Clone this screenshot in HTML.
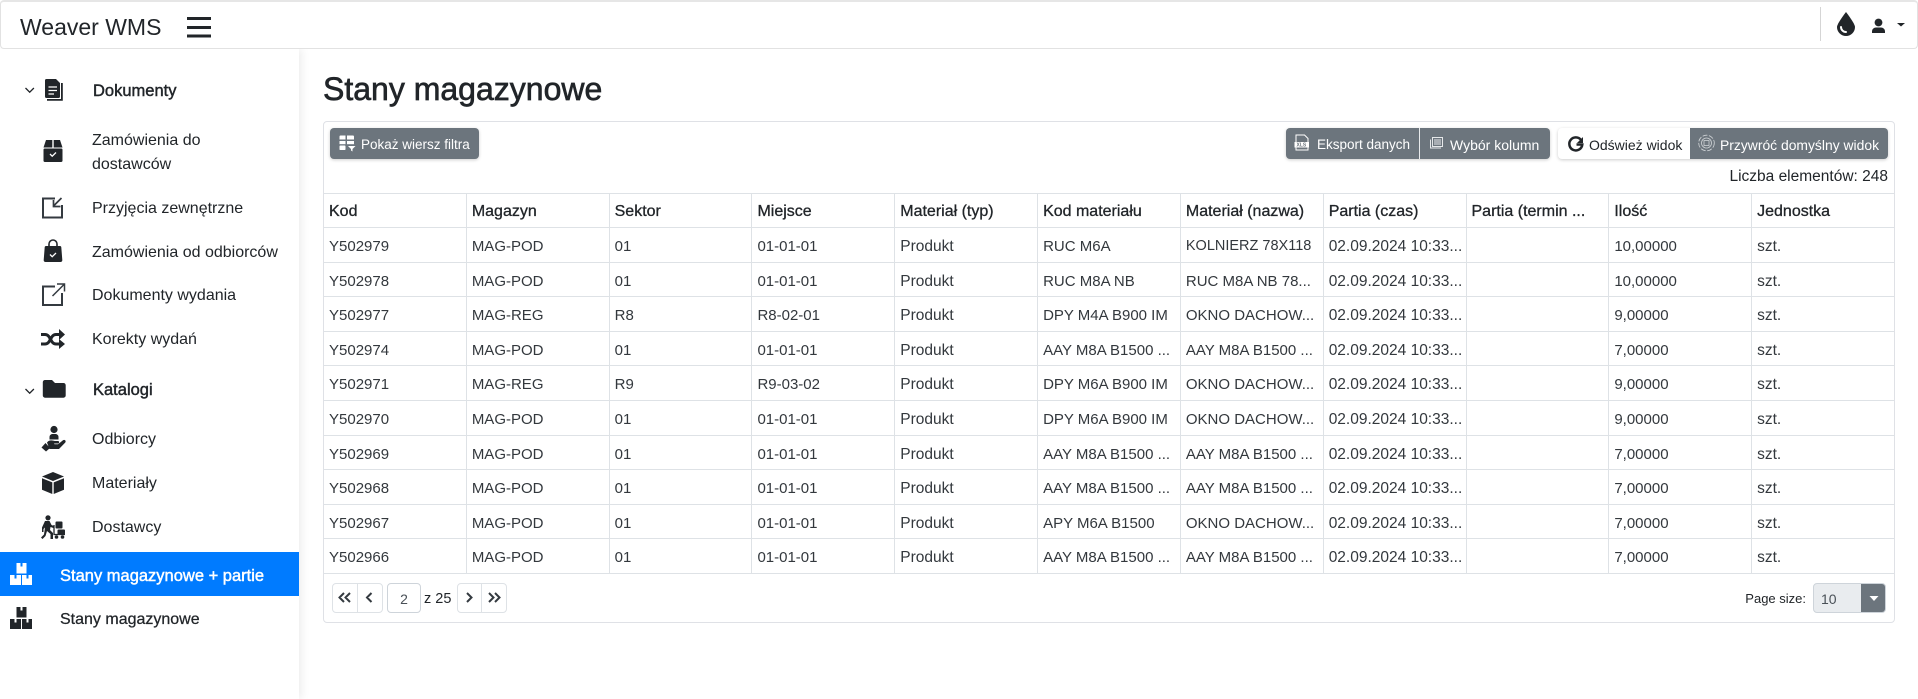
<!DOCTYPE html>
<html lang="pl"><head><meta charset="utf-8"><title>Stany magazynowe</title>
<style>
*{box-sizing:border-box}
html,body{margin:0;padding:0;width:1918px;height:699px;overflow:hidden;background:#fff;font-family:"Liberation Sans",sans-serif;color:#212529}
.t{position:absolute;white-space:nowrap;line-height:20px}
.nav{position:absolute;left:0;top:0;width:1918px;height:49px;border:1px solid #e2e2e2;border-top:2px solid #e6e6e6;border-radius:4px;background:#fff}
.side{position:absolute;left:0;top:49px;width:299px;height:650px;background:#fff;box-shadow:3px 0 8px rgba(0,0,0,.07)}
.act{position:absolute;left:0;top:552px;width:299px;height:44px;background:#007bff}
.s{font-size:16px}
.m{font-size:16.5px;-webkit-text-stroke:.45px currentColor}
.card{position:absolute;left:323px;top:121px;width:1572px;height:502px;border:1px solid #dfe1e6;border-radius:4px}
.btn{position:absolute;top:128px;height:31px;background:#6c757d;box-shadow:0 1px 3px rgba(0,0,0,.2)}
.bt{font-size:13.5px;color:#fff;top:134.5px}
.grid{position:absolute;left:324px;top:193px;width:1570px}
.r{display:flex;height:34.6px;border-bottom:1px solid #dee2e6;font-size:15px;line-height:37.5px;color:#33383d}
.h{height:35px;border-top:1px solid #dee2e6;color:#212529;-webkit-text-stroke:.3px currentColor;font-size:16px;line-height:36px}
.r div{width:142.82px;flex:none;padding-left:5px;border-right:1px solid #dee2e6;white-space:nowrap;overflow:hidden}
.r div:last-child{border-right:0}
.r div.l{font-size:15.5px}
.pg{position:absolute;top:583px;height:30px;border:1px solid #dee2e6;border-radius:4px;background:#fff}
svg{position:absolute;left:0;top:0}
</style></head><body>
<div class="side"></div>
<div class="act"></div>
<div class="nav"></div>
<div class="t" style="left:20px;top:15px;font-size:23px;line-height:24px">Weaver WMS</div>
<div style="position:absolute;left:1820px;top:7px;width:1px;height:34px;background:#d5d5d5"></div>

<div class="t m" style="left:93px;top:81px">Dokumenty</div>
<div class="t s" style="left:92px;top:130.5px">Zamówienia do</div>
<div class="t s" style="left:92px;top:155px">dostawców</div>
<div class="t s" style="left:92px;top:199px">Przyjęcia zewnętrzne</div>
<div class="t s" style="left:92px;top:243px">Zamówienia od odbiorców</div>
<div class="t s" style="left:92px;top:286px">Dokumenty wydania</div>
<div class="t s" style="left:92px;top:330px">Korekty wydań</div>
<div class="t m" style="left:93px;top:380px">Katalogi</div>
<div class="t s" style="left:92px;top:430px">Odbiorcy</div>
<div class="t s" style="left:92px;top:474px">Materiały</div>
<div class="t s" style="left:92px;top:518px">Dostawcy</div>
<div class="t m" style="left:60px;top:566px;color:#fff">Stany magazynowe + partie</div>
<div class="t m" style="left:60px;top:610px;font-size:16px;-webkit-text-stroke:.25px currentColor">Stany magazynowe</div>

<div class="t" style="left:323px;top:69px;font-size:32px;line-height:40px;-webkit-text-stroke:.65px currentColor">Stany magazynowe</div>

<div class="card"></div>
<div class="btn" style="left:330px;width:149px;border-radius:4px"></div>
<div class="t bt" style="left:361px">Pokaż wiersz filtra</div>
<div class="btn" style="left:1286px;width:264px;border-radius:4px"></div>
<div style="position:absolute;left:1419px;top:128px;width:1px;height:31px;background:#e8eaec"></div>
<div class="t bt" style="left:1317px">Eksport danych</div>
<div class="t bt" style="left:1450px;font-size:14px">Wybór kolumn</div>
<div style="position:absolute;left:1558px;top:128px;width:330px;height:31px;border-radius:4px;background:#fff;box-shadow:0 1px 3px rgba(0,0,0,.2)"></div>
<div style="position:absolute;left:1690px;top:128px;width:198px;height:31px;border-radius:0 4px 4px 0;background:#6c757d"></div>
<div class="t bt" style="left:1589px;color:#212529;font-size:14px">Odśwież widok</div>
<div class="t bt" style="left:1720px;font-size:13.9px">Przywróć domyślny widok</div>
<div class="t" style="right:30px;top:167px;font-size:15.5px">Liczba elementów: 248</div>

<div class="grid">
<div class="r h"><div>Kod</div><div>Magazyn</div><div>Sektor</div><div>Miejsce</div><div>Materiał (typ)</div><div>Kod materiału</div><div>Materiał (nazwa)</div><div>Partia (czas)</div><div>Partia (termin ...</div><div>Ilość</div><div>Jednostka</div></div>
<div class="r"><div>Y502979</div><div>MAG-POD</div><div>01</div><div>01-01-01</div><div class="l">Produkt</div><div>RUC M6A</div><div style="font-size:14.5px">KOLNIERZ 78X118</div><div class="l">02.09.2024 10:33...</div><div></div><div>10,00000</div><div class="l">szt.</div></div>
<div class="r"><div>Y502978</div><div>MAG-POD</div><div>01</div><div>01-01-01</div><div class="l">Produkt</div><div>RUC M8A NB</div><div>RUC M8A NB 78...</div><div class="l">02.09.2024 10:33...</div><div></div><div>10,00000</div><div class="l">szt.</div></div>
<div class="r"><div>Y502977</div><div>MAG-REG</div><div>R8</div><div>R8-02-01</div><div class="l">Produkt</div><div>DPY M4A B900 IM</div><div>OKNO DACHOW...</div><div class="l">02.09.2024 10:33...</div><div></div><div>9,00000</div><div class="l">szt.</div></div>
<div class="r"><div>Y502974</div><div>MAG-POD</div><div>01</div><div>01-01-01</div><div class="l">Produkt</div><div>AAY M8A B1500 ...</div><div>AAY M8A B1500 ...</div><div class="l">02.09.2024 10:33...</div><div></div><div>7,00000</div><div class="l">szt.</div></div>
<div class="r"><div>Y502971</div><div>MAG-REG</div><div>R9</div><div>R9-03-02</div><div class="l">Produkt</div><div>DPY M6A B900 IM</div><div>OKNO DACHOW...</div><div class="l">02.09.2024 10:33...</div><div></div><div>9,00000</div><div class="l">szt.</div></div>
<div class="r"><div>Y502970</div><div>MAG-POD</div><div>01</div><div>01-01-01</div><div class="l">Produkt</div><div>DPY M6A B900 IM</div><div>OKNO DACHOW...</div><div class="l">02.09.2024 10:33...</div><div></div><div>9,00000</div><div class="l">szt.</div></div>
<div class="r"><div>Y502969</div><div>MAG-POD</div><div>01</div><div>01-01-01</div><div class="l">Produkt</div><div>AAY M8A B1500 ...</div><div>AAY M8A B1500 ...</div><div class="l">02.09.2024 10:33...</div><div></div><div>7,00000</div><div class="l">szt.</div></div>
<div class="r"><div>Y502968</div><div>MAG-POD</div><div>01</div><div>01-01-01</div><div class="l">Produkt</div><div>AAY M8A B1500 ...</div><div>AAY M8A B1500 ...</div><div class="l">02.09.2024 10:33...</div><div></div><div>7,00000</div><div class="l">szt.</div></div>
<div class="r"><div>Y502967</div><div>MAG-POD</div><div>01</div><div>01-01-01</div><div class="l">Produkt</div><div>APY M6A B1500</div><div>OKNO DACHOW...</div><div class="l">02.09.2024 10:33...</div><div></div><div>7,00000</div><div class="l">szt.</div></div>
<div class="r"><div>Y502966</div><div>MAG-POD</div><div>01</div><div>01-01-01</div><div class="l">Produkt</div><div>AAY M8A B1500 ...</div><div>AAY M8A B1500 ...</div><div class="l">02.09.2024 10:33...</div><div></div><div>7,00000</div><div class="l">szt.</div></div>
</div>

<div class="pg" style="left:332px;width:51px"></div>
<div style="position:absolute;left:357px;top:583px;width:1px;height:30px;background:#dee2e6"></div>
<div class="pg" style="left:387px;width:34px;border-color:#ced4da"></div>
<div class="t" style="left:387px;width:34px;text-align:center;top:589px;font-size:14px;color:#495057">2</div>
<div class="t" style="left:424px;top:589px;font-size:14.5px">z 25</div>
<div class="pg" style="left:457px;width:50px"></div>
<div style="position:absolute;left:481px;top:583px;width:1px;height:30px;background:#dee2e6"></div>
<div class="t" style="right:112px;top:589px;font-size:13px">Page size:</div>
<div style="position:absolute;left:1813px;top:583px;width:73px;height:30px;background:#e9ecef;border:1px solid #ced4da;border-radius:4px;overflow:hidden"><div style="position:absolute;right:0;top:0;width:24px;height:30px;background:#6c757d"></div></div>
<div class="t" style="left:1821px;top:589px;font-size:14px;color:#495057">10</div>

<svg width="1918" height="699" viewBox="0 0 1918 699" fill="#212529">
<!-- hamburger -->
<rect x="187" y="17" width="24" height="3"/><rect x="187" y="26" width="24" height="3"/><rect x="187" y="34.500" width="24" height="3"/>
<!-- drop -->
<path d="M1846 12C1846 12 1837 23.500 1837 27a9 9 0 0 0 18 0C1855 23.500 1846 12 1846 12Z"/>
<path d="M1841 27a5 5 0 0 0 5 5" fill="none" stroke="#fff" stroke-width="2" stroke-linecap="round"/>
<!-- user -->
<circle cx="1878.500" cy="22.500" r="3.900"/><path d="M1872 33v-1.500c0-2.500 2-4 4-4h5c2 0 4 1.500 4 4V33Z"/>
<path d="M1897 23h8l-4 3.500Z"/>
<!-- chevrons -->
<path d="M25.500 88l4.200 4.200 4.200-4.200M25.500 389l4.200 4.200 4.200-4.200" fill="none" stroke="#212529" stroke-width="1.300"/>
<!-- docs -->
<path d="M46.500 79H56l4 4v13.500a1.500 1.500 0 0 1-1.500 1.500h-12A1.500 1.500 0 0 1 45 96.500V80.500A1.500 1.500 0 0 1 46.500 79Z"/>
<path d="M61 83h1.800v17.800H47V99h14Z"/>
<path d="M48.500 87H57M48.500 90.500H57M48.500 94H54" stroke="#fff" stroke-width="1.300"/>
<!-- box check -->
<path d="M46 140h6.300v7.500H43.500ZM53.700 140H60l2.500 7.500h-8.800Z"/>
<rect x="43.500" y="148.500" width="19" height="13.500" rx="1.200"/>
<path d="M50 154l2.200 2.200 3.800-3.700" fill="none" stroke="#fff" stroke-width="1.300"/>
<!-- import square -->
<path d="M55 198.500H43V217.500H62V205" fill="none" stroke="#343a40" stroke-width="2"/>
<path d="M61.500 198L54 205.500M53.500 200v6.500H60.500" fill="none" stroke="#343a40" stroke-width="1.700"/>
<!-- bag -->
<path d="M46 246h14c.8 0 1.200.5 1.300 1.200L62.300 260c.1 1.200-.7 2-1.800 2H45.500c-1.100 0-1.900-.8-1.800-2l1-12.800c.1-.7.5-1.200 1.300-1.200Z"/>
<path d="M49 250v-6a4 4 0 0 1 8 0v6" fill="none" stroke="#212529" stroke-width="1.600"/>
<path d="M50 254.500l2.200 2.200 3.800-3.700" fill="none" stroke="#fff" stroke-width="1.300"/>
<!-- external -->
<path d="M55 286.500H43V305H62V293" fill="none" stroke="#343a40" stroke-width="2"/>
<path d="M52.500 296L64 284.500M57 284H64.500V291.500" fill="none" stroke="#343a40" stroke-width="1.500"/>
<!-- shuffle -->
<path d="M41 334.500H45C51 334.500 50 344 56 344H60M41 344H45C51 344 50 334.500 56 334.500H60" fill="none" stroke="#212529" stroke-width="3"/>
<path d="M59 329l6 5.500-6 5.500ZM59 339l6 5-6 5Z"/>
<!-- folder -->
<path d="M45 380h7l3 3h8.500a2.200 2.200 0 0 1 2.200 2.200v10.300a2.200 2.200 0 0 1-2.200 2.200H45a2.200 2.200 0 0 1-2.200-2.200V382.200A2.200 2.200 0 0 1 45 380Z"/>
<!-- hand user -->
<circle cx="54" cy="429.500" r="3.600"/>
<path d="M49.500 439.500v-2.500c0-1.800 1.500-3 3-3h3c1.500 0 3 1.200 3 3v2.500Z"/>
<path d="M41.500 447.500l4-4.500 4.500 5-4 3.500ZM47 442.500c3-3.500 6-1.500 8-1.500h3c1.500 0 1.500 2.500 0 2.500h-4l.5.800h3.500l5-4c1.800-1.200 3.400.8 2.300 2.200l-6.300 6.500H49.500Z"/>
<!-- cube -->
<path d="M53 472l11 4.500L53 481 42 476.500ZM42 478.200l10.300 4.200V494L42 489.700ZM64 478.200L53.700 482.400V494L64 489.700Z"/>
<!-- dolly person -->
<circle cx="48" cy="517.800" r="2.600"/>
<path d="M45 521h4.500l2 4 3 1.200v2.200L50.500 527l-.5 3 3 3v6h-2.500v-5L47 531l-1.500 5-3 3-1.500-1.500 3-3 1-7-1.500 1.500v3H42v-4.500Z"/>
<rect x="55.500" y="521.500" width="7" height="7" rx="1"/><rect x="57.500" y="529.500" width="7.500" height="5" rx="1"/>
<path d="M54 525v9.500h11" fill="none" stroke="#212529" stroke-width="1.300"/><circle cx="56.500" cy="537" r="1.800"/><circle cx="62.500" cy="537" r="1.800"/>
<!-- boxes active -->
<g fill="#fff">
<path d="M16.500 563h4v3.500h2V563h4v10.500h-10ZM10 575h4.500v3.500h2V575H21v10H10ZM22 575h4.500v3.500h2V575H32v10H22Z"/>
</g>
<path d="M16.500 607h4v3.500h2V607h4v10.500h-10ZM10 619h4.500v3.500h2V619H21v10H10ZM22 619h4.500v3.500h2V619H32v10H22Z"/>
<!-- filter table icon -->
<g fill="#fff">
<path d="M340.500 135.500h5v4H339.500v-3a1 1 0 0 1 1-1ZM347 135.500h6a1 1 0 0 1 1 1v3h-7Z"/>
<rect x="339.500" y="141" width="6" height="3.200"/><rect x="347" y="141" width="7" height="3.200"/>
<rect x="339.500" y="145.500" width="6" height="4.500" rx=".8"/>
<path d="M348 146h7.500l-3 3v2.500l-1.500-1V149Z"/>
</g>
<!-- excel icon -->
<path d="M1296 135h8.500l3.500 3.500V150h-12Z" fill="none" stroke="#fff" stroke-width="1"/>
<rect x="1294.500" y="142" width="14.500" height="5.500" fill="#fff"/>
<text x="1296.500" y="146.700" font-size="5" font-family="Liberation Sans,sans-serif" fill="#6c757d" font-weight="bold">XLS</text>
<!-- columns -->
<g fill="none" stroke="#e6e8ea" stroke-width="1"><rect x="1432.500" y="137.500" width="10" height="9"/><path d="M1430.500 139.500v8.500H1441M1434 140H1441M1434 142H1441M1434 144H1441"/></g>
<!-- reload -->
<path d="M1581 140a6.500 6.500 0 1 0 1.300 4.500H1576.500" fill="none" stroke="#212529" stroke-width="2.500"/>
<path d="M1583 137v6h-6Z"/>
<!-- restore -->
<g fill="none" stroke="#cfd3d6"><circle cx="1706.500" cy="143" r="7.800" stroke-width=".8" stroke-dasharray="5 1.500"/><circle cx="1706.500" cy="143" r="5" stroke-width=".8"/><rect x="1704" y="140.500" width="5" height="5" stroke-width=".8"/></g>
<!-- pagination arrows -->
<g fill="none" stroke="#343a40" stroke-width="2">
<path d="M344 593l-4.500 4.500 4.500 4.500M350 593l-4.500 4.500 4.500 4.500M371.500 593l-4.500 4.500 4.500 4.500M467 593l4.500 4.500-4.500 4.500M489 593l4.500 4.500-4.500 4.500M495 593l4.500 4.500-4.500 4.500"/>
</g>
<path d="M1869.500 596h9l-4.500 5Z" fill="#fff"/>
</svg>
</body></html>
